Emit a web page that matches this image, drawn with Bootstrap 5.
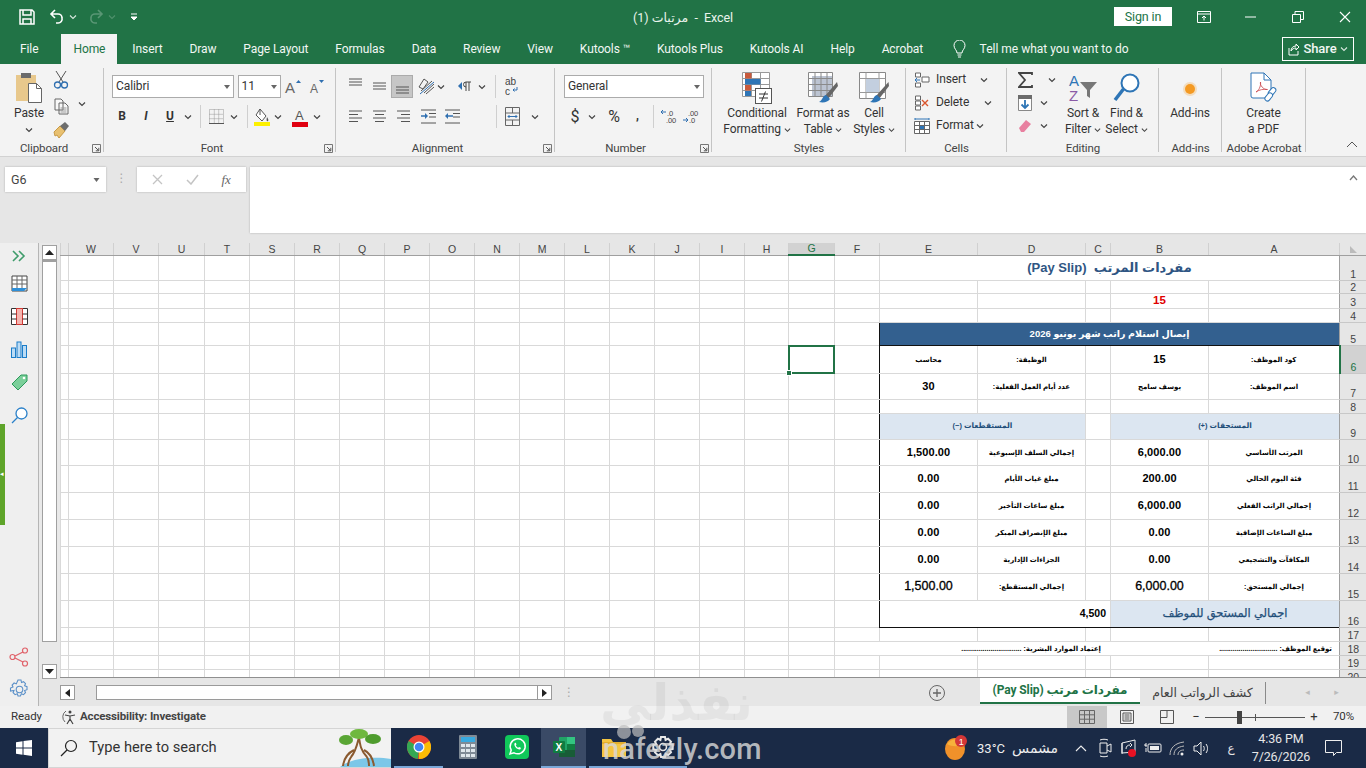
<!DOCTYPE html>
<html lang="en">
<head>
<meta charset="utf-8">
<title>مرتبات (1) - Excel</title>
<link href="https://cdn.jsdelivr.net/npm/bootstrap@5.3.0/dist/css/bootstrap.min.css" rel="stylesheet">
<style>
html,body{height:768px;overflow:hidden}
body{font-family:Roboto,"Liberation Sans","DejaVu Sans",sans-serif;font-size:12px;letter-spacing:-.1px;color:#333;background:#e6e6e6;line-height:1.2}
.app{height:768px;width:1366px;position:relative}
.app>*,.flex-none{flex:none}
.ttl{height:34px;background:#217346;color:#fff}
.qat{width:150px}
.ttl-mid{width:410px;margin-left:328px;font-size:12.5px;color:#e9f3ec;text-align:center}
.sign{width:58px;height:19px;background:#fff;color:#217346;font-size:12.5px;margin-left:226px;margin-top:-1px}
.win{width:47px}
.ml7{margin-left:7px}.ml11{margin-left:11px}.ml13{margin-left:13px}
.tabs{height:30px;background:#217346;color:#f2f7f4;font-size:12px;letter-spacing:-.1px;padding-left:6.500px}
.tb{padding:0 13.5px;height:30px;display:flex;align-items:center;white-space:nowrap}
.tb-on{background:#f3f3f3;color:#217346;padding:0 12px;margin:0 1.5px 0 9.500px}
.tell{padding-left:10px;letter-spacing:0}
.share{width:72px;height:24px;border:1px solid #fff;font-weight:500;font-size:13px;margin-left:auto;margin-right:12px;gap:3px}
.rib{height:93px;background:#f3f3f3;border-bottom:1px solid #d2d2d2;padding-top:4px}
.rg{height:88px;background:linear-gradient(#c4c4c4,#c4c4c4) right top/1px 84px no-repeat;flex:none}
.rb{height:72px}
.rl{height:16px;font-size:11.5px;line-height:16px;color:#444;text-align:center}
.rl-t{flex:1 1 auto}
.lau{width:16px;flex:none;line-height:16px}
.w-clip{width:104px}.w-font{width:232px}.w-alig{width:219px}.w-numb{width:157px}.w-styl{width:194px}.w-cell{width:101px}.w-edit{width:152px}.w-addi{width:63px}.w-adob{width:84px}
.sl{display:flex;align-items:center;justify-content:center;flex:none;height:23px}
.w10{width:10px}.w12{width:12px}.w20{width:20px}.w21{width:21px}.w22{width:22px}.w24{width:24px}
.pad7{padding-top:7px}.row2{margin-top:7px}
.pl8{padding-left:8px}.pl6{padding-left:6px}.pl7{padding-left:7px}.pl9{padding-left:9px}.pl11{padding-left:11px}
.sp2{width:2px;flex:none}.sp3{width:3.5px;flex:none}.sp4{width:4px;flex:none}.sp5{width:5px;flex:none}.sp6{width:6px;flex:none}.sp7{width:7px;flex:none}.sp8{width:8px;flex:none}.sp3a{width:3px;flex:none}.sp1a{width:1px;flex:none}
.vsep{width:1px;height:23px;background:#cfcfcf;flex:none}
.inp{height:23px;background:#fff;border:1px solid #ababab;font-size:12px;padding:0 3px;flex:none;color:#333}
.i-font{width:122px}.i-size{width:43px}.i-gen{width:140px}
.sel{background:#c6c6c6;border:1px solid #ababab;width:22px}
.big{display:flex;flex-direction:column;align-items:center;flex:none;padding-top:4px;text-align:center;white-space:nowrap;line-height:16px;font-size:12px}
.big>svg{height:32px;margin-bottom:1px;flex:none}
.b-paste{width:34px;margin-left:12px}
.b-cf{width:74px;margin-left:8px}.b-ft{width:58px}.b-cs{width:44px}
.b-sort{width:44px}.b-find{width:43px}.b-add{width:62px}.b-pdf{width:83px}
.cl-row{height:23px}
.cl-ic{width:22px;flex:none}
.cl-tx{width:40px;flex:none}
.fbar{height:86px;background:#e6e6e6;padding-top:10px}
.nm{width:101px;height:25px;background:#fff;margin-left:5px;padding:0 6px;box-shadow:0 0 2px rgba(0,0,0,.25);font-size:12.5px;color:#444}
.dots{width:31px;color:#aaa;text-align:center;letter-spacing:0}
.fx{width:109px;height:25px;background:#fff;box-shadow:0 0 2px rgba(0,0,0,.25)}
.fin{flex:1 1 auto;height:66px;margin-left:4px;background:#fff;box-shadow:0 0 2px rgba(0,0,0,.25)}
.fxt{font:italic 13px "Liberation Serif",serif;color:#666}
.side{width:39px;border-right:1px solid #b5b5b5;background:#efefef;flex:none;height:463px;padding-top:3px}
.side-i{height:33px;display:flex;align-items:center;justify-content:center;flex:none}
.side-first{height:20.500px}
.gbar{width:5px;height:101px;background:#5ea42a;margin-top:-7.500px;flex:none;color:#fff;font-size:7px}
.work{flex:1 1 auto;min-width:0}
.grid-wrap{height:435px;background:#e9e9e9}
.vs{width:21px;padding:2px 3px 0 3px;height:435px;flex:none}
.vs-b{width:15px;height:15px;background:#fff;border:1px solid #a0a0a0;flex:none}
.vs-t{width:15px;height:382px;background:#fff;border:1px solid #a0a0a0;border-top:2px solid #a0a0a0;flex:none}
.vs-g{height:22px;flex:none}
.sheet-w{overflow:hidden;height:435px;width:1306px;flex:none;background:#fff;border-bottom:1px solid #8f8f8f}
.sheet{table-layout:fixed;border-collapse:collapse;width:1306px;font-family:"Liberation Sans","DejaVu Sans",sans-serif;color:#000;letter-spacing:0}
.sheet td,.sheet th{padding:0;border:1px solid #d9d9d9;line-height:1;text-align:center;vertical-align:middle;font-weight:700;font-size:10px;overflow:hidden;white-space:nowrap}
.sheet thead th{height:12px;background:#e6e6e6;color:#444;font-weight:400;font-size:10.5px;border-top:0;border-bottom:1px solid #9f9f9f;border-left:1px solid #d0d0d0;border-right:1px solid #d0d0d0}
.sheet tbody th{background:#e6e6e6;color:#444;font-weight:400;font-size:10.5px;vertical-align:bottom;text-align:center;border-right:0;border-left:1px solid #9f9f9f;border-top:1px solid #c8c8c8;border-bottom:1px solid #c8c8c8}
.h13 td,.h13 th{height:13px}.h14 td,.h14 th{height:14px}.h15 td,.h15 th{height:15px}.h23 td,.h23 th{height:23px}.h25 td,.h25 th{height:25px}.h26 td,.h26 th{height:26px}.h27 td,.h27 th{height:27px}.h28 td,.h28 th{height:28px}
.c27{width:27px}.c131{width:131px}.c98{width:98px}.c25{width:25px}.c108{width:108px}.c45{width:45px}.c46{width:46px}.c44{width:44px}.c8{width:8px}
.sheet th.hd-on{background:#d2d2d2;color:#217346;border-bottom:2px solid #217346}
.sheet tbody th.rw-on{background:#d2d2d2;color:#217346;border-left:2px solid #217346}
.sheet td.cur{position:relative;overflow:visible}
.cur::before{content:"";position:absolute;inset:-1px;border:2px solid #217346}
.cur::after{content:"";position:absolute;left:-3px;bottom:-3px;width:6px;height:6px;background:#217346;border:1px solid #fff}
.sheet td.ttl1{font-size:13px;color:#2f5583}
.sheet td.red{color:#e00000;font-size:11.5px}
.sheet td.hd5{background:#33608f;color:#fff;font-size:9.500px;border:1.5px solid #111}
.sheet td.lb{font-size:7px;letter-spacing:-.05px}
.sheet td.num{font-size:11px;letter-spacing:.1px}
.sheet td.sec{background:#dce6f1;color:#1f4e79;font-size:7.5px}
.sheet td.big1{font-size:12.5px;font-weight:400;-webkit-text-stroke:.3px #000}
.sheet td.tot{background:#dce6f1;color:#1f4e79;font-size:11.5px;font-weight:400;-webkit-text-stroke:.25px #1f4e79}
.sheet td.val{text-align:right;padding-right:4px;font-size:10.5px}
.sheet td.sig{font-size:7px;text-align:right;padding-right:7px;border-left-color:#fff}
.sheet td.sig2{padding-right:9px}
.bR{border-right:1.5px solid #111!important}.bL{border-left:1.5px solid #111!important}.bB{border-bottom:1.5px solid #111!important}
.stabs{height:28px;background:#e6e6e6;border-top:1px solid transparent;padding-left:21px}
.hb{width:15px;height:15px;background:#fff;border:1px solid #9a9a9a;flex:none;display:flex;align-items:center;justify-content:center}
.ht{width:441px;height:15px;background:#fff;border:1px solid #9a9a9a;border-right:0;flex:none;margin-left:21px}
.sdots{width:34px;text-align:center;color:#aaa;flex:none}
.plus{margin-left:342px;width:18px;height:18px;flex:none}
.st-on{width:160px;height:26px;margin-left:34px;background:#fff;color:#217346;font-weight:700;font-size:12px;border-bottom:2px solid #217346;margin-top:-1px;align-self:flex-start;flex:none}
.st-off{width:126px;font-size:12.500px;color:#444;flex:none;height:22px;border-right:1px solid #8a8a8a}
.nv{width:29px;text-align:center;color:#bbb;font-size:9px;flex:none}
.nv1{margin-left:27px}
.sbar{height:22px;background:#f1f1f1;font-size:11.5px;color:#333}
.rdy{width:61px;padding-left:11px;flex:none}
.acc{font-weight:700;font-size:11.500px;color:#444;margin-left:1px;letter-spacing:-.15px}
.vw{width:40px;height:22px;flex:none;display:flex;align-items:center;justify-content:center}
.vw-on{background:#c8c8c8}
.zpm{width:18px;text-align:center;font-size:13px;flex:none}
.ztr{width:100px;height:1px;background:#555;flex:none;position:relative}
.zth{position:absolute;left:32px;top:-6px;width:5px;height:13px;background:#444}
.ztk{position:absolute;left:50px;top:-3px;width:1px;height:7px;background:#555}
.zpc{width:41px;text-align:center;flex:none}
.tbar{height:40px;background:#1a2a46;color:#e6e6e6}
.srch{width:343px;height:40px;background:#f2f2f2;margin-left:48px;font-size:14.700px;color:#333;flex:none;border:1px solid #d5d5d5;border-width:1px 0 1px 1px;overflow:hidden;letter-spacing:0}
.tk{width:49px;height:40px;display:flex;align-items:center;justify-content:center;flex:none;border-bottom:2px solid transparent}
.tk-u{border-bottom-color:#7aa7d8}
.tk-on{background:#3a4a66;width:45px;border-bottom-color:#7aa7d8}
.clk{width:70px;text-align:center;font-size:12.5px;line-height:18px;color:#e6e6e6;flex:none}
.wt{font-size:13px;letter-spacing:0;margin-left:8px;color:#eee}
.ws{font-size:14px;margin-left:10px;width:43px;text-align:center;color:#eee;letter-spacing:0}
.ml5{margin-left:5px}.ml3{margin-left:3px}.ml6{margin-left:6px}.ml11a{margin-left:11px}.mr21{margin-right:21px}
.wm{position:absolute;left:600px;top:678px;font:700 50px "DejaVu Sans",sans-serif;color:rgba(0,0,0,.05);line-height:1;pointer-events:none;letter-spacing:0}
.wm2{position:absolute;left:603px;top:732px;font:500 29px/1.2 Roboto,sans-serif;color:rgba(215,215,215,.82);pointer-events:none;letter-spacing:.2px}
.wm3{position:absolute;left:612px;top:724px;pointer-events:none}
</style>
</head>
<body class="m-0">
<svg class="d-none" xmlns="http://www.w3.org/2000/svg">
<symbol id="c" viewBox="0 0 8 6"><path d="M1 1.5l3 3 3-3" fill="none" stroke="#444" stroke-width="1.2"/></symbol>
<symbol id="cw" viewBox="0 0 8 6"><path d="M1 1.5l3 3 3-3" fill="none" stroke="#d8e8de" stroke-width="1.1"/></symbol>
<symbol id="lau" viewBox="0 0 9 9"><path d="M.5 8.5V.5h8v8z" fill="none" stroke="#777"/><path d="M3 3l3.5 3.5M6.8 3.8v3h-3" fill="none" stroke="#555"/></symbol>
</svg>
<div class="app d-flex flex-column">

<header class="ttl d-flex align-items-center">
  <div class="qat d-flex align-items-center flex-none">
    <span class="sl w22 ms-3"><svg width="16" height="16" viewBox="0 0 16 16"><path d="M1 1h12l2 2v12H1z M4 1v5h8V1 M4 15v-5h8v5" fill="none" stroke="#fff" stroke-width="1.5"/></svg></span>
    <span class="sl w22 ms-2"><svg width="16" height="16" viewBox="0 0 16 16"><path d="M6 1L2 5l4 4M2 5h7a4 4 0 0 1 4 4 4 4 0 0 1-4 5H7" fill="none" stroke="#fff" stroke-width="1.6"/></svg></span>
    <span class="sl w10"><svg width="8" height="6"><use href="#cw"/></svg></span>
    <span class="sl w22 ml7 opacity-25"><svg width="16" height="16" viewBox="0 0 16 16"><path d="M10 1l4 4-4 4M14 5H7a4 4 0 0 0-4 4 4 4 0 0 0 4 5h2" fill="none" stroke="#fff" stroke-width="1.6"/></svg></span>
    <span class="sl w10 opacity-25"><svg width="8" height="6"><use href="#cw"/></svg></span>
    <span class="sl w12 ml11"><svg width="8" height="9" viewBox="0 0 8 9"><path d="M1 1h6M1 4l3 3 3-3z" fill="#fff" stroke="#fff"/></svg></span>
  </div>
  <div class="ttl-mid flex-none" dir="rtl"><span dir="ltr">مرتبات (1)&nbsp;&nbsp;-&nbsp;&nbsp;Excel</span></div>
  <div class="sign d-flex align-items-center justify-content-center flex-none">Sign in</div>
  <span class="win sl ms-2"><svg width="14" height="12" viewBox="0 0 14 12"><path d="M.5.5h13v11H.5zM.5 3h13M7 9.5V5M5 7l2-2 2 2" fill="none" stroke="#fff"/></svg></span>
  <span class="win sl"><svg width="11" height="2"><path d="M0 1h11" stroke="#fff"/></svg></span>
  <span class="win sl"><svg width="12" height="12" viewBox="0 0 12 12"><path d="M.5 3.5h8v8h-8zM3 3.5V.5h8.500v8H8.500" fill="none" stroke="#fff"/></svg></span>
  <span class="win sl"><svg width="12" height="12" viewBox="0 0 12 12"><path d="M1 1l10 10M11 1L1 11" stroke="#fff" stroke-width="1.1"/></svg></span>
</header>

<nav class="tabs d-flex align-items-center">
  <span class="tb">File</span><span class="tb tb-on">Home</span><span class="tb">Insert</span><span class="tb">Draw</span><span class="tb">Page Layout</span><span class="tb">Formulas</span><span class="tb">Data</span><span class="tb">Review</span><span class="tb">View</span><span class="tb">Kutools ™</span><span class="tb">Kutools Plus</span><span class="tb">Kutools AI</span><span class="tb">Help</span><span class="tb">Acrobat</span>
  <span class="sl w20 ml13"><svg width="13" height="19" viewBox="0 0 13 19"><path d="M4 13c0-3-3-4-3-7.500a5.500 5.500 0 0 1 11 0C12 9 9 10 9 13zM4.500 15h4M5 17h3" fill="none" stroke="#fff"/></svg></span>
  <span class="tell">Tell me what you want to do</span>
  <span class="share d-flex align-items-center justify-content-center"><svg width="12" height="13" viewBox="0 0 12 13"><path d="M1 5v7h9V8M3 8c0-3 2-5 5-5V1l3 3-3 3V5C6 5 4 6 3 8z" fill="none" stroke="#fff"/></svg>Share<svg width="8" height="6"><use href="#cw"/></svg></span>
</nav>

<section class="rib d-flex">
  <div class="rg w-clip d-flex flex-column">
    <div class="rb d-flex">
      <div class="big b-paste"><svg width="30" height="32" viewBox="0 0 30 32"><rect x="2" y="3" width="20" height="26" fill="#e8c88c"/><rect x="7" y="1" width="10" height="5" fill="#6b6b6b"/><path d="M14.500 11.500h8l5 5v14h-13z" fill="#fff" stroke="#666"/><path d="M22.500 11.500v5h5" fill="none" stroke="#666"/></svg><span>Paste</span><span><svg width="8" height="6"><use href="#c"/></svg></span></div>
      <div class="d-flex flex-column align-items-center ms-1 pt-0">
        <span class="sl w22 mt-0"><svg width="16" height="20" viewBox="0 0 16 20"><path d="M3 1l7 11M13 1L6 12" stroke="#555" fill="none"/><circle cx="4.500" cy="15" r="3" fill="none" stroke="#2f6fb0" stroke-width="1.300"/><circle cx="11.500" cy="15" r="3" fill="none" stroke="#2f6fb0" stroke-width="1.300"/></svg></span>
        <span class="sl w22 mt-1"><svg width="15" height="17" viewBox="0 0 15 17"><path d="M1 1h6l2 2v9H1zM5 5h6l3 3v8H5z" fill="#f8f8f8" stroke="#666"/><path d="M6.500 10h6M6.500 12h6M6.500 14h6" stroke="#999"/></svg></span>
        <span class="sl w22 mt-0"><svg width="17" height="18" viewBox="0 0 17 18"><path d="M1 11l6-6 5 5-6 7-2-3-2 1z" fill="#e8c070" stroke="#c89a46"/><path d="M7 5l5 5 4-5-4-4z" fill="#6d6d6d"/></svg></span>
      </div>
      <span class="sl w12 h-100 align-self-center ms-1"><svg width="8" height="6"><use href="#c"/></svg></span>
    </div>
    <div class="rl d-flex"><span class="rl-t">Clipboard</span><span class="lau"><svg width="9" height="9"><use href="#lau"/></svg></span></div>
  </div>
  <div class="rg w-font d-flex flex-column">
    <div class="rb pad7">
      <div class="d-flex pl8">
        <div class="inp i-font d-flex align-items-center justify-content-between">Calibri<svg width="6" height="4" viewBox="0 0 6 4"><path d="M0 0h6L3 4z" fill="#666"/></svg></div><span class="sp3"></span>
        <div class="inp i-size d-flex align-items-center justify-content-between">11<svg width="6" height="4" viewBox="0 0 6 4"><path d="M0 0h6L3 4z" fill="#666"/></svg></div>
        <span class="sl w24 ms-0"><svg width="18" height="23" viewBox="0 0 18 23"><text x="1" y="18" font-family="Liberation Sans" font-size="15" fill="#666">A</text><path d="M12 8l2.500-3 2.500 3z" fill="#2f6fb0"/></svg></span>
        <span class="sl w24"><svg width="18" height="23" viewBox="0 0 18 23"><text x="2" y="18" font-family="Liberation Sans" font-size="12" fill="#666">A</text><path d="M11 5h5l-2.500 3z" fill="#2f6fb0"/></svg></span>
      </div>
      <div class="d-flex align-items-center row2 pl6">
        <span class="sl w24 fw-bold">B</span><span class="sl w24 fst-italic fw-bold">I</span><span class="sl w24 fw-bold text-decoration-underline">U</span><span class="sl w12"><svg width="8" height="6"><use href="#c"/></svg></span>
        <span class="sp6"></span><span class="vsep"></span><span class="sp3a"></span>
        <span class="sl w24"><svg width="15" height="15" viewBox="0 0 15 15"><path d="M.5.5h14v14H.5zM5.300.5v14M9.700.5v14M.5 5.300h14M.5 9.700h14" fill="none" stroke="#999" stroke-dasharray="1 1"/><path d="M0 14.500h15" stroke="#555"/></svg></span>
        <span class="sl w12"><svg width="8" height="6"><use href="#c"/></svg></span>
        <span class="sp7"></span><span class="vsep"></span><span class="sp3a"></span>
        <span class="sl w22"><svg width="17" height="18" viewBox="0 0 17 18"><path d="M6 1l6 7-4 5-6-6z" fill="#fff" stroke="#555"/><path d="M6 1v6" stroke="#555"/><path d="M13 9c1 2 2 3 1 4s-2 0-1-4z" fill="#555"/><rect x="0" y="14" width="16" height="4" fill="#fcf000"/></svg></span>
        <span class="sl w10"><svg width="8" height="6"><use href="#c"/></svg></span>
        <span class="sp6"></span>
        <span class="sl w22"><svg width="16" height="20" viewBox="0 0 16 20"><text x="3" y="13" font-family="Liberation Sans" font-size="13" fill="#555">A</text><rect x="0" y="15" width="16" height="5" fill="#e00010"/></svg></span>
        <span class="sl w12"><svg width="8" height="6"><use href="#c"/></svg></span>
      </div>
    </div>
    <div class="rl d-flex"><span class="rl-t">Font</span><span class="lau"><svg width="9" height="9"><use href="#lau"/></svg></span></div>
  </div>
  <div class="rg w-alig d-flex flex-column">
    <div class="rb pad7">
      <div class="d-flex align-items-center pl7">
        <span class="sl w24"><svg width="15" height="9" viewBox="0 0 15 9" class="mb-2"><path d="M1 1h13M1 4h13M1 7h13" stroke="#555"/></svg></span>
        <span class="sl w24"><svg width="15" height="9" viewBox="0 0 15 9"><path d="M1 1h13M1 4h13M1 7h13" stroke="#555"/></svg></span>
        <span class="sl sel ms-0 w22"><svg width="15" height="9" viewBox="0 0 15 9" class="mt-2"><path d="M1 1h13M1 4h13M1 7h13" stroke="#555"/></svg></span>
        <span class="sp3a"></span>
        <span class="sl w20"><svg width="17" height="17" viewBox="0 0 17 17"><path d="M1 9l5-8 4 3-5 7zM3 13L14 3M6 15L16 6M8 16L16 9" fill="none" stroke="#555"/><path d="M2 16l14-12" stroke="#2f6fb0"/></svg></span>
        <span class="sl w10"><svg width="8" height="6"><use href="#c"/></svg></span>
        <span class="sp8"></span>
        <span class="sl w22"><svg width="17" height="20" viewBox="0 0 17 20"><path d="M5 5L1 9l4 4z" fill="#2f6fb0"/><path d="M9 14V5M12 14V5M14 5H9a2.500 2.500 0 0 0 0 5" fill="none" stroke="#444"/></svg></span>
        <span class="sl w12"><svg width="8" height="6"><use href="#c"/></svg></span>
        <span class="sp7"></span><span class="vsep"></span><span class="sp5"></span>
        <span class="sl w21"><svg width="14" height="23" viewBox="0 0 14 23"><text x="0" y="10" font-family="Liberation Sans" font-size="10" fill="#444">ab</text><text x="0" y="20" font-family="Liberation Sans" font-size="10" fill="#444">c</text><path d="M12 12v3H8M9.500 13.500L8 15l1.500 1.500" fill="none" stroke="#2f6fb0"/></svg></span>
      </div>
      <div class="d-flex align-items-center row2 pl7">
        <span class="sl w24"><svg width="15" height="13" viewBox="0 0 15 13"><path d="M1 1h13M1 4.500h9M1 8h13M1 11.500h9" stroke="#555"/></svg></span>
        <span class="sl w24"><svg width="15" height="13" viewBox="0 0 15 13"><path d="M1 1h13M3 4.500h9M1 8h13M3 11.500h9" stroke="#555"/></svg></span>
        <span class="sl w24"><svg width="15" height="13" viewBox="0 0 15 13"><path d="M1 1h13M5 4.500h9M1 8h13M5 11.500h9" stroke="#555"/></svg></span>
        <span class="sp1a"></span>
        <span class="sl w24"><svg width="17" height="15" viewBox="0 0 17 15"><path d="M1 1h15M9 4.500h7M9 8h7M1 14h15" stroke="#555"/><path d="M1 7h5" stroke="#2f6fb0" stroke-width="1.500"/><path d="M5 4l3 3-3 3z" fill="#2f6fb0"/></svg></span>
        <span class="sl w24"><svg width="17" height="15" viewBox="0 0 17 15"><path d="M1 1h15M9 4.500h7M9 8h7M1 14h15" stroke="#555"/><path d="M4 7h5" stroke="#2f6fb0" stroke-width="1.500"/><path d="M4 4L1 7l3 3z" fill="#2f6fb0"/></svg></span>
        <span class="sp8"></span><span class="sp8"></span><span class="sp8"></span><span class="sp8"></span><span class="vsep"></span><span class="sp4"></span>
        <span class="sl w22"><svg width="15" height="19" viewBox="0 0 15 19"><path d="M.5.500h14v18H.5zM.5 6h14M.5 13h14M7.500.5V6M7.500 13v5.500" fill="none" stroke="#666"/><path d="M3 9.500h9M4.500 8L3 9.500 4.500 11M10.500 8L12 9.500 10.500 11" fill="none" stroke="#2f6fb0"/></svg></span>
        <span class="sp6"></span>
        <span class="sl w12"><svg width="8" height="6"><use href="#c"/></svg></span>
      </div>
    </div>
    <div class="rl d-flex"><span class="rl-t">Alignment</span><span class="lau"><svg width="9" height="9"><use href="#lau"/></svg></span></div>
  </div>
  <div class="rg w-numb d-flex flex-column">
    <div class="rb pad7">
      <div class="d-flex pl9"><div class="inp i-gen d-flex align-items-center justify-content-between">General<svg width="6" height="4" viewBox="0 0 6 4"><path d="M0 0h6L3 4z" fill="#666"/></svg></div></div>
      <div class="d-flex align-items-center row2 pl9">
        <span class="sl w22 fs-6">$</span><span class="sl w12"><svg width="8" height="6"><use href="#c"/></svg></span><span class="sp5"></span>
        <span class="sl w22 fs-6">%</span><span class="sp2"></span><span class="sl w21 fw-bold">,</span><span class="sp5"></span><span class="vsep"></span><span class="sp4"></span>
        <span class="sl w22"><svg width="18" height="17" viewBox="0 0 18 17"><text x="7" y="8" font-family="Liberation Sans" font-size="7.500" fill="#444">.0</text><text x="6" y="15" font-family="Liberation Sans" font-size="7.500" fill="#444">.00</text><path d="M6 4H1M3 2L1 4l2 2" fill="none" stroke="#2f6fb0"/></svg></span>
        <span class="sl w22"><svg width="18" height="17" viewBox="0 0 18 17"><text x="6" y="8" font-family="Liberation Sans" font-size="7.500" fill="#444">.00</text><text x="7" y="15" font-family="Liberation Sans" font-size="7.500" fill="#444">.0</text><path d="M1 12h5M4 10l2 2-2 2" fill="none" stroke="#2f6fb0"/></svg></span>
      </div>
    </div>
    <div class="rl d-flex"><span class="rl-t">Number</span><span class="lau"><svg width="9" height="9"><use href="#lau"/></svg></span></div>
  </div>
  <div class="rg w-styl d-flex flex-column">
    <div class="rb d-flex">
      <div class="big b-cf"><svg width="30" height="32" viewBox="0 0 30 32"><path d="M.5.5h27v24H.5zM9.500.5v24M18.500.5v24M.5 6.500h27M.5 12.500h27M.5 18.500h27" fill="#fff" stroke="#999"/><path d="M3 1h6.500v5.500H3zM3 13h6v5.500H3z" fill="#c85a3c"/><path d="M3 7h15.500v5.500H3z" fill="#2e75b6"/><path d="M3 19h6v5H3z" fill="#2e75b6"/><rect x="13.500" y="16.500" width="16" height="15" fill="#fff" stroke="#555"/><path d="M17 22h9M17 26h9M23.500 19.500l-4 10" stroke="#333" fill="none"/></svg><span>Conditional</span><span>Formatting <svg width="7" height="6"><use href="#c"/></svg></span></div>
      <div class="big b-ft"><svg width="30" height="32" viewBox="0 0 30 32"><path d="M.5.5h24v24H.5z" fill="#fff" stroke="#888"/><path d="M4 4h20v20H4z" fill="#bcc4d2"/><path d="M.5 6.500h24M.5 12.500h24M.5 18.500h24M7 .5v24M13 .5v24M19 .5v24" stroke="#8a8a8a" fill="none"/><path d="M29 10L17 24l3 3 10-13z" fill="#666"/><path d="M18 23c-4 1-3 5-7 7 5 1 9 0 11-3z" fill="#2e75b6"/></svg><span>Format as</span><span>Table <svg width="7" height="6"><use href="#c"/></svg></span></div>
      <div class="big b-cs"><svg width="30" height="32" viewBox="0 0 30 32"><path d="M.5.5h26v26H.5z" fill="#fff" stroke="#888"/><path d="M.5 6.500h26M.5 20.500h26M7 .5v26M20 .5v26" stroke="#999" fill="none"/><path d="M7 7h13v13H7z" fill="#c3cfdf"/><path d="M29.500 10L17 24l3 3 10-13z" fill="#666"/><path d="M18 23c-4 1-3 5-7 7 5 1 9 0 11-3z" fill="#2e75b6"/></svg><span>Cell</span><span>Styles <svg width="7" height="6"><use href="#c"/></svg></span></div>
    </div>
    <div class="rl">Styles</div>
  </div>
  <div class="rg w-cell d-flex flex-column">
    <div class="rb">
      <div class="cl-row d-flex align-items-center pl8"><span class="cl-ic"><svg width="16" height="16" viewBox="0 0 16 16"><path d="M1.500 1h5v4h-5zM1.500 11h5v4h-5zM8 5h7v5H8z" fill="#fff" stroke="#666"/><path d="M6 8H1M3 6L1 8l2 2" fill="none" stroke="#2e75b6"/></svg></span><span class="cl-tx">Insert</span><svg width="8" height="6" class="ms-1"><use href="#c"/></svg></div>
      <div class="cl-row d-flex align-items-center pl8"><span class="cl-ic"><svg width="16" height="16" viewBox="0 0 16 16"><path d="M1.500 1h5v4h-5zM1.500 6h5v4h-5zM1.500 11h5v4h-5z" fill="#fff" stroke="#666"/><path d="M8 5l6 6M14 5l-6 6" stroke="#d9552c" stroke-width="1.400"/></svg></span><span class="cl-tx">Delete</span><svg width="8" height="6" class="ms-2"><use href="#c"/></svg></div>
      <div class="cl-row d-flex align-items-center pl8"><span class="cl-ic"><svg width="16" height="18" viewBox="0 0 16 18"><path d="M.5 4.500h15v12H.5zM.5 8.500h15M.5 12.500h15M5.500 4.500v12M10.500 4.500v12" fill="#fff" stroke="#666"/><rect x="6" y="9" width="4" height="3" fill="#2e75b6"/><path d="M1 2h14M1 1v2M15 1v2" stroke="#2e75b6"/></svg></span><span class="cl-tx">Format</span><svg width="8" height="6"><use href="#c"/></svg></div>
    </div>
    <div class="rl">Cells</div>
  </div>
  <div class="rg w-edit d-flex flex-column">
    <div class="rb d-flex">
      <div class="pl11 flex-none">
        <div class="cl-row d-flex align-items-center"><span class="cl-ic"><svg width="15" height="16" viewBox="0 0 15 16"><path d="M14 3V1H1l6 7-6 7h13v-2" fill="none" stroke="#444" stroke-width="1.800"/></svg></span><svg width="8" height="6" class="ms-2"><use href="#c"/></svg></div>
        <div class="cl-row d-flex align-items-center"><span class="cl-ic"><svg width="14" height="16" viewBox="0 0 14 16"><path d="M.5.5h13v15H.5z" fill="#fff" stroke="#888"/><rect x="0" y="0" width="14" height="4" fill="#6b6b6b"/><path d="M7 5v8M3.500 9.500L7 13l3.500-3.500" fill="none" stroke="#2e75b6" stroke-width="1.800"/></svg></span><svg width="8" height="6"><use href="#c"/></svg></div>
        <div class="cl-row d-flex align-items-center"><span class="cl-ic"><svg width="14" height="14" viewBox="0 0 14 14"><path d="M1 9l7-8 5 4-7 8H3z" fill="#e880a0"/></svg></span><svg width="8" height="6"><use href="#c"/></svg></div>
      </div>
      <span class="sp5"></span>
      <div class="big b-sort"><svg width="30" height="32" viewBox="0 0 30 32"><text x="1" y="14" font-family="Liberation Sans" font-size="15" fill="#2e75b6">A</text><text x="1" y="29" font-family="Liberation Sans" font-size="15" fill="#8a5ba6">Z</text><path d="M12 10h17l-7 8v8l-3-2v-6z" fill="#777"/></svg><span>Sort &amp;</span><span>Filter <svg width="7" height="6"><use href="#c"/></svg></span></div>
      <div class="big b-find"><svg width="28" height="32" viewBox="0 0 28 32"><circle cx="17" cy="11" r="8.500" fill="#fff" stroke="#2e75b6" stroke-width="2"/><path d="M10.500 17L2 28" stroke="#2e75b6" stroke-width="3.500"/></svg><span>Find &amp;</span><span>Select <svg width="7" height="6"><use href="#c"/></svg></span></div>
    </div>
    <div class="rl">Editing</div>
  </div>
  <div class="rg w-addi d-flex flex-column">
    <div class="rb d-flex"><div class="big b-add"><svg width="30" height="32" viewBox="0 0 30 32"><circle cx="15" cy="17" r="5" fill="#f59a23"/><circle cx="15" cy="17" r="7" fill="#f59a23" opacity=".25"/></svg><span>Add-ins</span></div></div>
    <div class="rl">Add-ins</div>
  </div>
  <div class="rg w-adob d-flex flex-column">
    <div class="rb d-flex"><div class="big b-pdf"><svg width="28" height="32" viewBox="0 0 28 32"><path d="M1 1h13l7 7v16a2 2 0 0 1-2 2H3a2 2 0 0 1-2-2z" fill="#fff" stroke="#2e75b6"/><path d="M14 1v7h7" fill="none" stroke="#2e75b6"/><path d="M6 20c4-2 5-8 4.500-10-1 3 3 8 7 7.500-4-.5-8 0-11.500 2.500z" fill="none" stroke="#c9454a" stroke-width=".8"/><rect x="20" y="15" width="5" height="9" rx="2.500" transform="rotate(40 22 19)" fill="#fff" stroke="#2e75b6"/><rect x="16" y="20" width="5" height="9" rx="2.500" transform="rotate(40 18 25)" fill="#fff" stroke="#2e75b6"/></svg><span>Create</span><span>a PDF</span></div></div>
    <div class="rl">Adobe Acrobat</div>
  </div>
  <div class="flex-grow-1 d-flex justify-content-end align-items-end pe-2 pb-1"><svg width="12" height="7" viewBox="0 0 12 7" class="mb-1"><path d="M1 6l5-5 5 5" fill="none" stroke="#555"/></svg></div>
</section>

<section class="fbar d-flex align-items-start">
  <div class="nm d-flex align-items-center justify-content-between flex-none">G6<svg width="7" height="4" viewBox="0 0 6 4"><path d="M0 0h6L3 4z" fill="#666"/></svg></div>
  <div class="dots pt-1">⋮</div>
  <div class="fx d-flex align-items-center justify-content-around px-1 flex-none">
    <svg width="11" height="11" viewBox="0 0 11 11"><path d="M1 1l9 9M10 1l-9 9" stroke="#c4c4c4" stroke-width="1.300"/></svg>
    <svg width="13" height="11" viewBox="0 0 13 11"><path d="M1 6l4 4 7-9" fill="none" stroke="#c4c4c4" stroke-width="1.500"/></svg>
    <span class="fxt">fx</span>
  </div>
  <div class="fin d-flex justify-content-end pe-2 pt-2"><svg width="9" height="6" viewBox="0 0 9 6"><path d="M1 5l3.500-4L8 5" fill="none" stroke="#777" stroke-width="1.300"/></svg></div>
</section>

<div class="d-flex">
  <aside class="side d-flex flex-column align-items-stretch">
    <div class="side-i side-first"><svg width="14" height="12" viewBox="0 0 14 12"><path d="M1 1l5 5-5 5M7 1l5 5-5 5" fill="none" stroke="#3f9c6b" stroke-width="1.600"/></svg></div>
    <div class="side-i"><svg width="17" height="17" viewBox="0 0 17 17"><path d="M1 1h15v15H1z" fill="#fff" stroke="#444"/><path d="M1 5h15M1 9h15M6 1v12M11 1v12" stroke="#666"/><path d="M1 13h15l-3 3H1z" fill="#2e8fd8"/></svg></div>
    <div class="side-i"><svg width="17" height="17" viewBox="0 0 17 17"><path d="M.5.5h16v16H.5z" fill="#fff" stroke="#333"/><rect x="5.500" y=".5" width="6" height="16" fill="#f5b5b0" stroke="#d03a35"/><path d="M.5 6h5M.5 11h5M11.500 6h5M11.500 11h5" stroke="#333"/></svg></div>
    <div class="side-i"><svg width="16" height="17" viewBox="0 0 16 17"><g fill="#bcdcf5" stroke="#1b7dc9"><rect x=".5" y="7" width="4" height="9.500"/><rect x="6" y="1" width="4" height="15.500"/><rect x="11.500" y="4.500" width="4" height="12"/></g></svg></div>
    <div class="side-i"><svg width="17" height="17" viewBox="0 0 17 17"><path d="M1 10l9-9h6v6l-9 9z" fill="#7bcf9a" stroke="#2c9a5b"/><circle cx="13" cy="4" r="1.300" fill="#fff"/></svg></div>
    <div class="side-i"><svg width="17" height="17" viewBox="0 0 17 17"><circle cx="10.500" cy="6.500" r="5.500" fill="#fff" stroke="#2a80c9" stroke-width="1.300"/><path d="M6.500 10.500L1 16" stroke="#2a80c9" stroke-width="1.300"/></svg></div>
    <div class="gbar d-flex align-items-center">◂</div>
    <div class="side-i mt-auto"><svg width="20" height="20" viewBox="0 0 20 20"><g fill="none" stroke="#e0626a" stroke-width="1.200"><circle cx="3.500" cy="10" r="2.500"/><circle cx="16" cy="3.500" r="2.500"/><circle cx="16" cy="16.500" r="2.500"/><path d="M6 9l8-4M6 11l8 4"/></g></svg></div>
    <div class="side-i"><svg width="21" height="21" viewBox="0 0 21 21"><g fill="none" stroke="#5b90c8" stroke-width="1.100"><path d="M9 1h3l.5 2.500 2-.8 2 2-.9 2 2.400 1v3l-2.400.800.900 2.200-2 2-2.100-1-1 2.300H9l-.700-2.300-2.200 1-2-2 .9-2.200L1.500 12V9l2.500-1-.9-2 2-2 2.200.9z"/><circle cx="10.500" cy="10.500" r="3.300"/></g></svg></div>
  </aside>
  <div class="work">
    <div class="grid-wrap d-flex">
      <div class="vs d-flex flex-column">
        <div class="vs-b d-flex align-items-center justify-content-center"><svg width="9" height="5" viewBox="0 0 9 5"><path d="M0 5l4.500-5L9 5z" fill="#222"/></svg></div>
        <div class="vs-t"></div>
        <div class="vs-g"></div>
        <div class="vs-b d-flex align-items-center justify-content-center"><svg width="9" height="5" viewBox="0 0 9 5"><path d="M0 0l4.500 5L9 0z" fill="#222"/></svg></div>
      </div>
      <div class="sheet-w">
        <table class="sheet" dir="rtl">
          <colgroup>
            <col class="c27"><col class="c131"><col class="c98"><col class="c25"><col class="c108"><col class="c98"><col class="c45"><col class="c46"><col class="c44"><col class="c45"><col class="c45"><col class="c45"><col class="c45"><col class="c45"><col class="c45"><col class="c45"><col class="c45"><col class="c45"><col class="c45"><col class="c45"><col class="c45"><col class="c46"><col class="c45"><col class="c45"><col class="c8">
          </colgroup>
          <thead><tr>
            <th><svg width="7" height="7" viewBox="0 0 7 7"><path d="M0 0l7 7H0z" fill="#bbb"/></svg></th><th>A</th><th>B</th><th>C</th><th>D</th><th>E</th><th>F</th><th class="hd-on">G</th><th>H</th><th>I</th><th>J</th><th>K</th><th>L</th><th>M</th><th>N</th><th>O</th><th>P</th><th>Q</th><th>R</th><th>S</th><th>T</th><th>U</th><th>V</th><th>W</th><th></th>
          </tr></thead>
          <tbody>
            <tr class="h25"><th>1</th><td colspan="5" class="ttl1">مفردات المرتب&nbsp;&nbsp;(Pay Slip)</td><td></td><td></td><td></td><td></td><td></td><td></td><td></td><td></td><td></td><td></td><td></td><td></td><td></td><td></td><td></td><td></td><td></td><td></td><td></td></tr>
            <tr class="h13"><th>2</th><td></td><td></td><td></td><td></td><td></td><td></td><td></td><td></td><td></td><td></td><td></td><td></td><td></td><td></td><td></td><td></td><td></td><td></td><td></td><td></td><td></td><td></td><td></td><td></td></tr>
            <tr class="h15"><th>3</th><td></td><td class="red">15</td><td></td><td></td><td></td><td></td><td></td><td></td><td></td><td></td><td></td><td></td><td></td><td></td><td></td><td></td><td></td><td></td><td></td><td></td><td></td><td></td><td></td><td></td></tr>
            <tr class="h14"><th>4</th><td></td><td></td><td></td><td></td><td></td><td></td><td></td><td></td><td></td><td></td><td></td><td></td><td></td><td></td><td></td><td></td><td></td><td></td><td></td><td></td><td></td><td></td><td></td><td></td></tr>
            <tr class="h23"><th>5</th><td colspan="5" class="hd5">إيصال استلام راتب شهر يونيو 2026</td><td></td><td></td><td></td><td></td><td></td><td></td><td></td><td></td><td></td><td></td><td></td><td></td><td></td><td></td><td></td><td></td><td></td><td></td><td></td></tr>
            <tr class="h28"><th class="rw-on">6</th><td class="lb bR">كود الموظف:</td><td class="num">15</td><td></td><td class="lb">الوظيفة:</td><td class="lb bL">محاسب</td><td></td><td class="cur"></td><td></td><td></td><td></td><td></td><td></td><td></td><td></td><td></td><td></td><td></td><td></td><td></td><td></td><td></td><td></td><td></td><td></td></tr>
            <tr class="h26"><th>7</th><td class="lb bR">اسم الموظف:</td><td class="lb">يوسف سامح</td><td></td><td class="lb">عدد أيام العمل الفعلية:</td><td class="num bL">30</td><td></td><td></td><td></td><td></td><td></td><td></td><td></td><td></td><td></td><td></td><td></td><td></td><td></td><td></td><td></td><td></td><td></td><td></td><td></td></tr>
            <tr class="h14"><th>8</th><td class="bR"></td><td></td><td></td><td></td><td class="bL"></td><td></td><td></td><td></td><td></td><td></td><td></td><td></td><td></td><td></td><td></td><td></td><td></td><td></td><td></td><td></td><td></td><td></td><td></td><td></td></tr>
            <tr class="h26"><th>9</th><td colspan="2" class="sec bR">المستحقات (+)</td><td></td><td colspan="2" class="sec bL">المستقطعات (−)</td><td></td><td></td><td></td><td></td><td></td><td></td><td></td><td></td><td></td><td></td><td></td><td></td><td></td><td></td><td></td><td></td><td></td><td></td><td></td></tr>
            <tr class="h26"><th>10</th><td class="lb bR">المرتب الأساسي</td><td class="num">6,000.00</td><td></td><td class="lb">إجمالي السلف الإسبوعية</td><td class="num bL">1,500.00</td><td></td><td></td><td></td><td></td><td></td><td></td><td></td><td></td><td></td><td></td><td></td><td></td><td></td><td></td><td></td><td></td><td></td><td></td><td></td></tr>
            <tr class="h27"><th>11</th><td class="lb bR">فئة اليوم الحالي</td><td class="num">200.00</td><td></td><td class="lb">مبلغ غياب الأيام</td><td class="num bL">0.00</td><td></td><td></td><td></td><td></td><td></td><td></td><td></td><td></td><td></td><td></td><td></td><td></td><td></td><td></td><td></td><td></td><td></td><td></td><td></td></tr>
            <tr class="h27"><th>12</th><td class="lb bR">إجمالي الراتب الفعلي</td><td class="num">6,000.00</td><td></td><td class="lb">مبلغ ساعات التأخير</td><td class="num bL">0.00</td><td></td><td></td><td></td><td></td><td></td><td></td><td></td><td></td><td></td><td></td><td></td><td></td><td></td><td></td><td></td><td></td><td></td><td></td><td></td></tr>
            <tr class="h27"><th>13</th><td class="lb bR">مبلغ الساعات الإضافية</td><td class="num">0.00</td><td></td><td class="lb">مبلغ الإنصراف المبكر</td><td class="num bL">0.00</td><td></td><td></td><td></td><td></td><td></td><td></td><td></td><td></td><td></td><td></td><td></td><td></td><td></td><td></td><td></td><td></td><td></td><td></td><td></td></tr>
            <tr class="h27"><th>14</th><td class="lb bR">المكافآت والتشجيعي</td><td class="num">0.00</td><td></td><td class="lb">الجزاءات الإدارية</td><td class="num bL">0.00</td><td></td><td></td><td></td><td></td><td></td><td></td><td></td><td></td><td></td><td></td><td></td><td></td><td></td><td></td><td></td><td></td><td></td><td></td><td></td></tr>
            <tr class="h27"><th>15</th><td class="lb bR">إجمالي المستحق:</td><td class="big1">6,000.00</td><td></td><td class="lb">إجمالي المستقطع:</td><td class="big1 bL">1,500.00</td><td></td><td></td><td></td><td></td><td></td><td></td><td></td><td></td><td></td><td></td><td></td><td></td><td></td><td></td><td></td><td></td><td></td><td></td><td></td></tr>
            <tr class="h27"><th>16</th><td colspan="2" class="tot bR bB">اجمالي المستحق للموظف</td><td colspan="3" class="val bL bB">4,500</td><td></td><td></td><td></td><td></td><td></td><td></td><td></td><td></td><td></td><td></td><td></td><td></td><td></td><td></td><td></td><td></td><td></td><td></td><td></td></tr>
            <tr class="h14"><th>17</th><td></td><td></td><td></td><td></td><td></td><td></td><td></td><td></td><td></td><td></td><td></td><td></td><td></td><td></td><td></td><td></td><td></td><td></td><td></td><td></td><td></td><td></td><td></td><td></td></tr>
            <tr class="h14"><th>18</th><td colspan="2" class="sig">توقيع الموظف: ..............................</td><td colspan="3" class="sig sig2">إعتماد الموارد البشرية: ...............................</td><td></td><td></td><td></td><td></td><td></td><td></td><td></td><td></td><td></td><td></td><td></td><td></td><td></td><td></td><td></td><td></td><td></td><td></td><td></td></tr>
            <tr class="h14"><th>19</th><td></td><td></td><td></td><td></td><td></td><td></td><td></td><td></td><td></td><td></td><td></td><td></td><td></td><td></td><td></td><td></td><td></td><td></td><td></td><td></td><td></td><td></td><td></td><td></td></tr>
            <tr class="h14"><th>20</th><td></td><td></td><td></td><td></td><td></td><td></td><td></td><td></td><td></td><td></td><td></td><td></td><td></td><td></td><td></td><td></td><td></td><td></td><td></td><td></td><td></td><td></td><td></td><td></td></tr>
          </tbody>
        </table>
      </div>
    </div>
    <div class="stabs d-flex align-items-center">
      <span class="hb"><svg width="5" height="8" viewBox="0 0 5 8"><path d="M5 0L0 4l5 4z" fill="#222"/></svg></span>
      <span class="ht"></span>
      <span class="hb"><svg width="5" height="8" viewBox="0 0 5 8"><path d="M0 0l5 4-5 4z" fill="#222"/></svg></span>
      <span class="sdots">⋮</span>
      <span class="plus"><svg width="18" height="18" viewBox="0 0 18 18"><circle cx="9" cy="9" r="7.500" fill="none" stroke="#666"/><path d="M5 9h8M9 5v8" stroke="#666" stroke-width="1.300"/></svg></span>
      <span class="st-on d-flex align-items-center justify-content-center" dir="rtl">مفردات مرتب (Pay Slip)</span>
      <span class="st-off d-flex align-items-center justify-content-center" dir="rtl">كشف الرواتب العام</span>
      <span class="nv nv1">◂</span><span class="nv">▸</span>
    </div>
  </div>
</div>

<footer class="sbar d-flex align-items-center">
  <span class="rdy">Ready</span>
  <svg width="18" height="16" viewBox="0 0 18 16"><path d="M5 2a7 7 0 0 0-1 11" fill="none" stroke="#666"/><circle cx="9" cy="3" r="1.500" fill="#444"/><path d="M4 6l5 1 5-1M9 7v3l-3 5M9 10l3 5" fill="none" stroke="#444" stroke-width="1.200"/></svg>
  <span class="acc">Accessibility: Investigate</span>
  <div class="d-flex align-items-center ms-auto">
    <span class="vw vw-on"><svg width="16" height="14" viewBox="0 0 16 14"><path d="M.5.500h15v13H.5zM.5 4.800h15M.5 9.200h15M5.500.5v13M10.500.5v13" fill="none" stroke="#666"/></svg></span>
    <span class="vw"><svg width="14" height="14" viewBox="0 0 14 14"><path d="M.5.500h13v13H.5zM3 3h8v8H3zM4.500 5h5M4.500 7h5M4.500 9h5" fill="none" stroke="#555"/></svg></span>
    <span class="vw"><svg width="14" height="14" viewBox="0 0 14 14"><path d="M.5.500h13v13H.5zM7 .5v7M7 7.500H.5" fill="none" stroke="#555"/></svg></span>
    <span class="zpm">−</span>
    <span class="ztr"><span class="zth"></span><span class="ztk"></span></span>
    <span class="zpm">+</span>
    <span class="zpc">70%</span>
    <span class="sp2"></span>
  </div>
</footer>

<div class="tbar d-flex align-items-center">
  <svg class="position-absolute ms-3" width="16" height="16" viewBox="0 0 16 16"><path d="M0 2.300l6.500-1v6.200H0zM7.500 1.100L16 0v7.500H7.500zM0 8.500h6.500v6.200l-6.500-1zM7.500 8.500H16V16l-8.500-1.200z" fill="#fff"/></svg>
  <div class="srch d-flex align-items-center">
    <span class="sl w24 ms-2"><svg width="18" height="18" viewBox="0 0 18 18"><circle cx="11" cy="7" r="5.500" fill="none" stroke="#222" stroke-width="1.200"/><path d="M7 11l-6 6" stroke="#222" stroke-width="1.300"/></svg></span>
    <span class="ms-2 flex-grow-1">Type here to search</span>
    <svg width="62" height="40" viewBox="0 0 62 40" class="flex-none"><path d="M10 40c10-10 35-12 52-9v9z" fill="#7cc7e8"/><path d="M30 9c-2 8-3 14-8 20M30 9c1 8 2 14 8 20M25 22c-6 3-10 8-11 16M35 22c6 3 9 9 10 16M22 29c-2 3-3 6-3 9M38 29c2 3 2 6 2 9" stroke="#8a5a30" stroke-width="2" fill="none"/><ellipse cx="30" cy="6" rx="9" ry="5" fill="#6fb83f"/><ellipse cx="17" cy="12" rx="7" ry="5" fill="#5aa635"/><ellipse cx="44" cy="11" rx="8" ry="5" fill="#4f9c2e"/></svg>
  </div>
  <span class="sp3a"></span>
  <span class="tk tk-u"><svg width="24" height="24" viewBox="0 0 24 24"><circle cx="12" cy="12" r="12" fill="#ea4335"/><path d="M12 12L22.400 6A12 12 0 0 1 12 24z" fill="#fbbc05"/><path d="M12 12l-1 12A12 12 0 0 1 1.600 6z" fill="#34a853"/><circle cx="12" cy="12" r="5.500" fill="#fff"/><circle cx="12" cy="12" r="4.300" fill="#4285f4"/></svg></span>
  <span class="tk"><svg width="18" height="24" viewBox="0 0 18 24"><rect width="18" height="24" rx="1" fill="#7f8a96"/><rect x="2" y="2" width="14" height="5" fill="#38a9e0"/><g fill="#dfe6ec"><rect x="2" y="9" width="4" height="3"/><rect x="7" y="9" width="4" height="3"/><rect x="12" y="9" width="4" height="3"/><rect x="2" y="14" width="4" height="3"/><rect x="7" y="14" width="4" height="3"/><rect x="12" y="14" width="4" height="3"/><rect x="2" y="19" width="4" height="3"/><rect x="7" y="19" width="4" height="3"/><rect x="12" y="19" width="4" height="3"/></g></svg></span>
  <span class="tk"><svg width="24" height="24" viewBox="0 0 24 24"><rect width="24" height="24" rx="4" fill="#10c85a"/><path d="M5 19l1.200-4a7.500 7.500 0 1 1 2.800 2.800z" fill="none" stroke="#fff" stroke-width="1.500"/><path d="M9.500 8.500c-1 2 2.500 6.500 5.500 6 1-.5 1-1.500.5-2l-1.500-.5-.7.800c-1-.3-2.300-1.800-2.500-2.600l.7-.7-.6-1.500c-.6-.5-1-.2-1.400.5z" fill="#fff"/></svg></span>
  <span class="tk tk-on"><svg width="22" height="22" viewBox="0 0 22 22"><rect x="6" y="1" width="16" height="20" rx="1" fill="#21a366"/><rect x="14" y="1" width="8" height="7" fill="#33c481"/><rect x="14" y="8" width="8" height="6" fill="#107c41"/><rect x="6" y="14" width="16" height="7" fill="#185c37"/><rect x="0" y="5" width="12" height="12" rx="1" fill="#107c41"/><text x="2.500" y="15" font-family="Liberation Sans" font-size="10" font-weight="700" fill="#fff">X</text></svg></span>
  <span class="sp3a"></span>
  <span class="tk tk-u"><svg width="24" height="20" viewBox="0 0 24 20"><path d="M0 2h9l2 3h13v15H0z" fill="#f4c542"/><path d="M0 5h24v2H0z" fill="#e3ae2e"/></svg></span>
  <span class="tk tk-u"><svg width="22" height="22" viewBox="0 0 22 22"><path d="M9 1h4l.600 3 2.500-1.300 2.900 2.900L17.700 8l3 .800v4.200l-3 .800 1.300 2.400-2.900 2.900-2.500-1.300L13 21H9l-.600-3-2.500 1.300-2.900-2.900L4.300 14l-3-.800V9l3-.800L3 5.600l2.900-2.900L8.400 4z" fill="none" stroke="#e8e8e8" stroke-width="2"/><circle cx="11" cy="11" r="3.500" fill="none" stroke="#e8e8e8" stroke-width="1.600"/></svg></span>
  <div class="d-flex align-items-center ms-auto mr21">
    <span class="sl w24"><svg width="24" height="26" viewBox="0 0 24 26"><ellipse cx="10" cy="14" rx="10" ry="11" fill="#f0912a"/><path d="M2 9a10 11 0 0 1 16 0c-4 3-11 3-16 0z" fill="#f7b23b"/><circle cx="16" cy="6" r="6" fill="#d43737"/><text x="13.800" y="9.500" font-family="Liberation Sans" font-size="9" fill="#fff">1</text></svg></span>
    <span class="wt lh-1 text-nowrap">33°C</span>
    <span class="ws lh-1 text-nowrap" dir="rtl">مشمس</span>
    <span class="sl w24 ml11a"><svg width="12" height="7" viewBox="0 0 12 7"><path d="M1 6l5-5 5 5" fill="none" stroke="#eee" stroke-width="1.100"/></svg></span>
    <span class="sl w24"><svg width="14" height="20" viewBox="0 0 14 20"><path d="M2 5h7v10H2zM9 8l4-2v8l-4-2M2 2c3-1 5-1 8 0M2 18c3 1 5 1 8 0" fill="none" stroke="#eee"/></svg></span>
    <span class="sl w24"><svg width="18" height="18" viewBox="0 0 18 18"><path d="M2 4l13-3v12l-13 1zM2 4v11" fill="none" stroke="#eee"/><path d="M6 10c0-3 2-4 4-4M10 4l2 2-2 2" fill="none" stroke="#eee"/><circle cx="12" cy="14" r="4" fill="#e81123"/></svg></span>
    <span class="sl w24"><svg width="18" height="12" viewBox="0 0 18 12"><rect x="4" y="2" width="13" height="8" rx="1" fill="none" stroke="#eee"/><rect x="6" y="4" width="9" height="4" fill="#eee"/><path d="M2 1v3M1 2v2h2M2 6v4" stroke="#eee" fill="none"/></svg></span>
    <span class="sl w24"><svg width="16" height="15" viewBox="0 0 16 15"><path d="M1 14c0-7 5-12 14-13M5 14c0-5 3-8 10-9M9 14c0-3 2-5 6-5" fill="none" stroke="#bbb"/><circle cx="13" cy="13" r="1.500" fill="#eee"/></svg></span>
    <span class="sl w24"><svg width="16" height="15" viewBox="0 0 16 15"><path d="M1 5h3l4-4v13l-4-4H1zM10.500 5c1 1.500 1 3.500 0 5M13 3c2 2.500 2 6.500 0 9" fill="none" stroke="#eee"/></svg></span>
    <span class="sl w24 ml6" dir="rtl">ع</span>
    <div class="clk ml3">4:36 PM<br>7/26/2026</div>
    <span class="sl w24 ml5"><svg width="17" height="16" viewBox="0 0 17 16"><path d="M.5.500h16v12h-5l-3 3v-3h-8z" fill="none" stroke="#eee"/></svg></span>
  </div>
</div>

<div class="wm" dir="rtl">نفذلي</div>
<svg class="wm3" width="40" height="24" viewBox="0 0 40 24"><circle cx="12" cy="8" r="7" fill="rgba(190,190,190,.7)"/><circle cx="26" cy="7" r="6" fill="rgba(190,190,190,.7)"/></svg>
<div class="wm2">nafezly.com</div>
</div>
</body>
</html>
